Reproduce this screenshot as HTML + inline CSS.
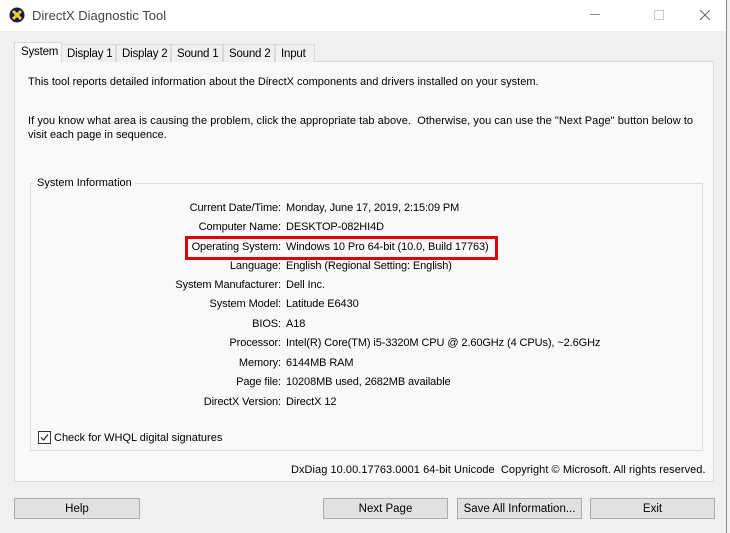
<!DOCTYPE html>
<html><head><style>
*{margin:0;padding:0;box-sizing:border-box}
body{width:730px;height:533px;background:#f0f0f0;font-family:"Liberation Sans",sans-serif;font-size:11px;color:#000;position:relative;overflow:hidden;letter-spacing:0}
.a{position:absolute;white-space:nowrap}
#title{left:0;top:0;width:727px;height:31px;background:#fff}
#wb{left:726px;top:0;width:1px;height:533px;background:#888}
.tab{position:absolute;top:44px;height:18px;border:1px solid #d9d9d9;border-bottom:none;background:#f0f0f0;padding:3px 0 0 5px;font-size:11.5px;letter-spacing:-0.2px}
#panel{left:14px;top:61px;width:700px;height:421px;background:#f9f9f9;border:1px solid #d9d9d9}
#grp{left:30px;top:183px;width:673px;height:268px;border:1px solid #dcdcdc}
.lab{position:absolute;right:449px;text-align:right;letter-spacing:-0.1px}
.val{position:absolute;left:286px;letter-spacing:-0.1px}
.btn{position:absolute;top:498px;height:21px;background:#e1e1e1;border:1px solid #adadad;text-align:center;line-height:21px;font-size:11.5px}
</style></head><body>
<div class="a" id="title"></div>
<svg class="a" style="left:9px;top:7px" width="16" height="16" viewBox="0 0 16 16"><circle cx="8" cy="8" r="7.5" fill="#1a1a4a"/><path d="M4 4L12 12M12 4L4 12" stroke="#e8d020" stroke-width="3"/></svg>
<div class="a" style="left:32px;top:8px;font-size:13px;color:#444">DirectX Diagnostic Tool</div>
<div class="a" style="left:590px;top:14px;width:10px;height:1px;background:#888"></div>
<div class="a" style="left:654px;top:10px;width:10px;height:10px;border:1px solid #ccc"></div>
<svg class="a" style="left:699px;top:9px" width="12" height="12"><path d="M1 1L11 11M11 1L1 11" stroke="#666" stroke-width="1"/></svg>
<div class="a" id="wb"></div>
<div class="a" id="panel"></div>
<div class="tab" style="left:61px;width:55px">Display 1</div>
<div class="tab" style="left:116px;width:55px">Display 2</div>
<div class="tab" style="left:171px;width:52px">Sound 1</div>
<div class="tab" style="left:223px;width:52px">Sound 2</div>
<div class="tab" style="left:275px;width:40px">Input</div>
<div class="tab" style="left:14px;top:42px;width:48px;height:21px;background:#f9f9f9;padding-left:6px">System</div>
<div class="a" style="left:28px;top:76px">This tool reports detailed information about the DirectX components and drivers installed on your system.</div>
<div class="a" style="left:28px;top:115px;letter-spacing:0.05px">If you know what area is causing the problem, click the appropriate tab above.&nbsp; Otherwise, you can use the "Next Page" button below to</div>
<div class="a" style="left:28px;top:129px">visit each page in sequence.</div>
<div class="a" id="grp"></div>
<div class="a" style="left:34px;top:177px;background:#f9f9f9;padding:0 3px">System Information</div>
<div class="lab" style="top:202px">Current Date/Time:</div><div class="val" style="top:202px">Monday, June 17, 2019, 2:15:09 PM</div>
<div class="lab" style="top:221px">Computer Name:</div><div class="val" style="top:221px">DESKTOP-082HI4D</div>
<div class="lab" style="top:241px">Operating System:</div><div class="val" style="top:241px">Windows 10 Pro 64-bit (10.0, Build 17763)</div>
<div class="lab" style="top:260px">Language:</div><div class="val" style="top:260px">English (Regional Setting: English)</div>
<div class="lab" style="top:279px">System Manufacturer:</div><div class="val" style="top:279px">Dell Inc.</div>
<div class="lab" style="top:298px">System Model:</div><div class="val" style="top:298px">Latitude E6430</div>
<div class="lab" style="top:318px">BIOS:</div><div class="val" style="top:318px">A18</div>
<div class="lab" style="top:337px">Processor:</div><div class="val" style="top:337px">Intel(R) Core(TM) i5-3320M CPU @ 2.60GHz (4 CPUs), ~2.6GHz</div>
<div class="lab" style="top:357px">Memory:</div><div class="val" style="top:357px">6144MB RAM</div>
<div class="lab" style="top:376px">Page file:</div><div class="val" style="top:376px">10208MB used, 2682MB available</div>
<div class="lab" style="top:396px">DirectX Version:</div><div class="val" style="top:396px">DirectX 12</div>
<div class="a" style="left:185px;top:236px;width:313px;height:24px;border:3px solid #e00000"></div>
<div class="a" style="left:38px;top:431px;width:13px;height:13px;border:1px solid #333;background:#fff"></div>
<svg class="a" style="left:39px;top:432px" width="11" height="11"><path d="M2 5.5L4.5 8L9 2.5" stroke="#222" fill="none" stroke-width="1.2"/></svg>
<div class="a" style="left:54px;top:432px">Check for WHQL digital signatures</div>
<div class="a" style="left:291px;top:464px;letter-spacing:0.05px">DxDiag 10.00.17763.0001 64-bit Unicode&nbsp; Copyright © Microsoft. All rights reserved.</div>
<div class="btn" style="left:14px;width:126px">Help</div>
<div class="btn" style="left:323px;width:125px">Next Page</div>
<div class="btn" style="left:457px;width:125px">Save All Information...</div>
<div class="btn" style="left:590px;width:125px">Exit</div>
</body></html>
